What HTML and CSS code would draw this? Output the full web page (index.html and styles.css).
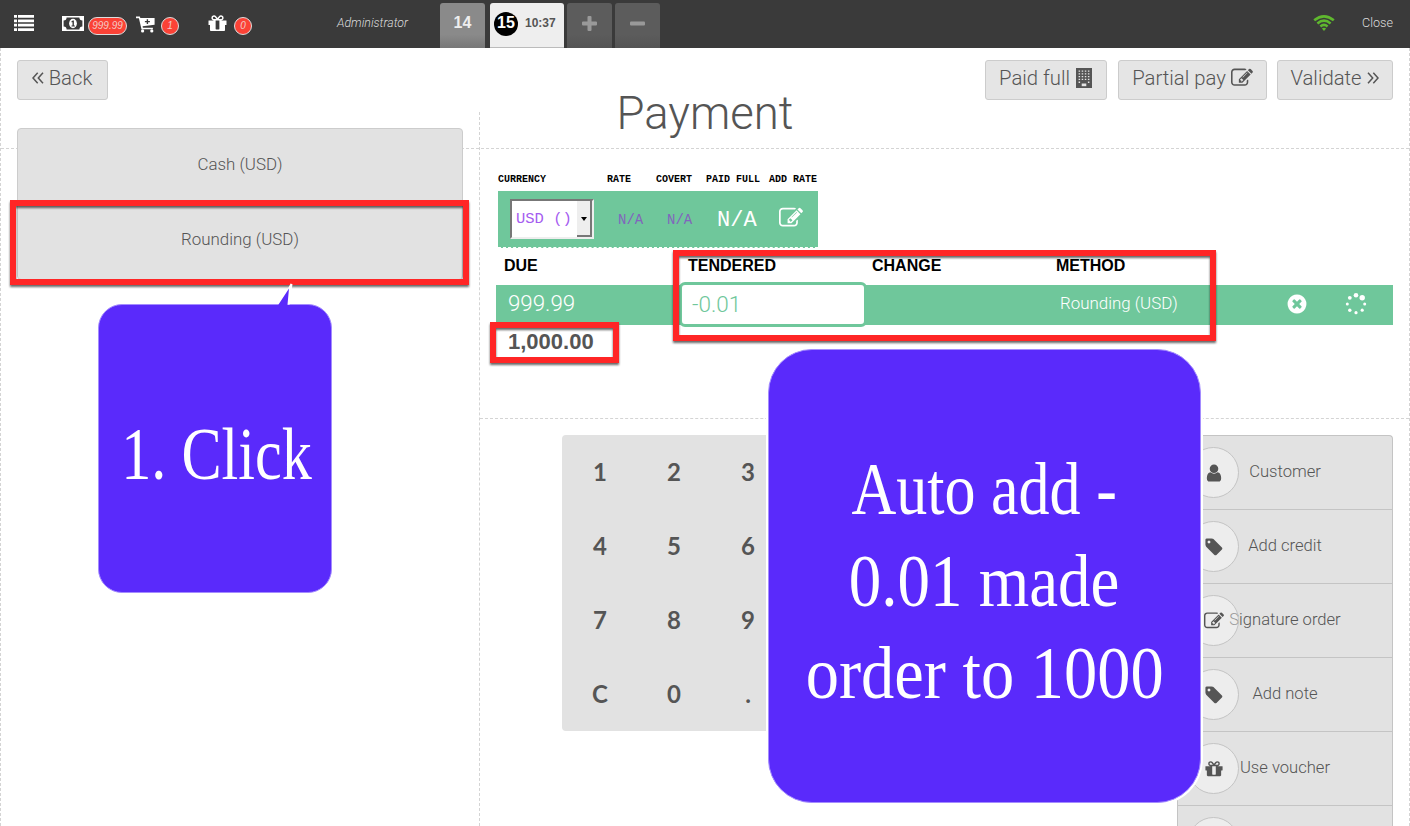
FILE: index.html
```html
<!DOCTYPE html>
<html lang="en">
<head>
<meta charset="utf-8">
<title>Payment</title>
<link rel="stylesheet" href="styles.css">
</head>
<body>
<svg class="defs" width="0" height="0">
  <symbol id="edit" viewBox="0 0 1792 1792"><path d="M888 1184l116-116-152-152-116 116v56h96v96h56zm440-720q-16-16-33 1l-350 350q-17 17-1 33t33-1l350-350q17-17 1-33zm80 594v190q0 119-84.5 203.5t-203.5 84.5h-832q-119 0-203.5-84.5t-84.5-203.5v-832q0-119 84.5-203.5t203.5-84.5h832q63 0 117 25 15 7 18 23 3 17-9 29l-49 49q-14 14-32 8-23-6-45-6h-832q-66 0-113 47t-47 113v832q0 66 47 113t113 47h832q66 0 113-47t47-113v-126q0-13 9-22l64-64q15-15 35-7t20 29zm-96-738l288 288-672 672h-288v-288zm444 132l-92 92-288-288 92-92q28-28 68-28t68 28l152 152q28 28 28 68t-28 68z"/></symbol>
  <symbol id="user" viewBox="0 0 1792 1792"><path d="M1536 1399q0 109-62.5 187t-150.5 78h-854q-88 0-150.5-78t-62.5-187q0-85 8.5-160.5t31.5-152 58.5-131 94-89 134.5-34.5q131 128 313 128t313-128q76 0 134.5 34.5t94 89 58.5 131 31.5 152 8.5 160.5zm-256-887q0 159-112.5 271.5t-271.5 112.5-271.5-112.5-112.5-271.5 112.5-271.5 271.5-112.5 271.5 112.5 112.5 271.5z"/></symbol>
  <symbol id="tag" viewBox="0 0 1792 1792"><path d="M576 448q0-53-37.5-90.5t-90.5-37.5-90.5 37.5-37.5 90.5 37.5 90.5 90.5 37.5 90.5-37.5 37.5-90.5zm1067 576q0 53-37 90l-491 492q-39 37-91 37-53 0-90-37l-715-716q-38-37-64.5-101t-26.5-117v-416q0-52 38-90t90-38h416q53 0 117 26.5t102 64.5l715 714q37 39 37 91z"/></symbol>
  <symbol id="gift" viewBox="0 0 1792 1792"><path d="M1056 1356v-716h-320v716q0 25 18 38.5t46 13.5h192q28 0 46-13.5t18-38.5zm-456-844h195l-126-161q-26-31-69-31-40 0-68 28t-28 68 28 68 68 28zm688-96q0-40-28-68t-68-28q-43 0-69 31l-125 161h194q40 0 68-28t28-68zm376 256v320q0 14-9 23t-23 9h-96v416q0 40-28 68t-68 28h-1088q-40 0-68-28t-28-68v-416h-96q-14 0-23-9t-9-23v-320q0-14 9-23t23-9h440q-93 0-158.5-65.5t-65.5-158.5 65.5-158.5 158.5-65.5q107 0 168 77l128 165 128-165q61-77 168-77 93 0 158.5 65.5t65.5 158.5-65.5 158.5-158.5 65.5h440q14 0 23 9t9 23z"/></symbol>
  <symbol id="remove" viewBox="0 0 1792 1792"><path d="M1277 1122q0-26-19-45l-181-181 181-181q19-19 19-45 0-27-19-46l-90-90q-19-19-46-19-26 0-45 19l-181 181-181-181q-19-19-45-19-27 0-46 19l-90 90q-19 19-19 46 0 26 19 45l181 181-181 181q-19 19-19 45 0 27 19 46l90 90q19 19 46 19 26 0 45-19l181-181 181 181q19 19 45 19 27 0 46-19l90-90q19-19 19-46zm387-226q0 209-103 385.5t-279.5 279.5-385.5 103-385.5-103-279.5-279.5-103-385.5 103-385.5 279.5-279.5 385.5-103 385.5 103 279.5 279.5 103 385.5z"/></symbol>
</svg>

<header class="topbar">
  <svg class="ico-list" width="20" height="16" viewBox="0 0 20 16"><path d="M0 0h3v2.8H0zM4 0h16v2.8H4zM0 4.4h3v2.8H0zM4 4.4h16v2.8H4zM0 8.8h3v2.8H0zM4 8.8h16v2.8H4zM0 13.2h3V16H0zM4 13.2h16V16H4z"/></svg>
  <svg class="ico-money" width="22" height="15" viewBox="0 0 22 15"><path fill-rule="evenodd" d="M0 0h22v15H0zM4.6 1.6A3 3 0 0 1 1.6 4.6v5.8a3 3 0 0 1 3 3h12.8a3 3 0 0 1 3-3V4.600a3 3 0 0 1-3-3z"/><ellipse cx="11" cy="7.500" rx="3.900" ry="4.700"/><path class="cut" d="M9.300 5.600l1.500-1.200h1.100v5h1v1.100H9.500V9.400h1V6l-.6.500z"/></svg>
  <span class="badge badge-total">999.99</span>
  <svg class="ico-cart" width="20" height="17" viewBox="0 0 20 17"><path fill-rule="evenodd" d="M0 .6h3.800l.6 1.500H18.600v6.700L6.600 10.300l.3 1.400h10v1.500H5.500L2.900 2.200H0zM10.700 3.200v1.700H8.900v1.300h1.800v1.700h1.400V6.200h1.800V4.900h-1.800V3.200z"/><circle cx="6.600" cy="14.900" r="1.600"/><circle cx="15.800" cy="14.900" r="1.600"/></svg>
  <span class="badge badge-cart">1</span>
  <svg class="ico-gift" width="21" height="21"><use href="#gift"/></svg>
  <span class="badge badge-gift">0</span>
  <span class="cashier">Administrator</span>
  <nav class="tabs">
    <span class="tab tab-old">14</span>
    <span class="tab tab-active"><b>15</b><em>10:37</em></span>
    <span class="tab tab-tool"><svg width="15" height="15" viewBox="0 0 15 15"><path d="M5.500 1q0-1 1-1h2q1 0 1 1v4.500H14q1 0 1 1v2q0 1-1 1H9.500V14q0 1-1 1h-2q-1 0-1-1V9.500H1q-1 0-1-1v-2q0-1 1-1h4.500z"/></svg></span>
    <span class="tab tab-tool"><svg width="15" height="15" viewBox="0 0 15 15"><rect y="5.500" width="15" height="4" rx="1"/></svg></span>
  </nav>
  <svg class="ico-wifi" width="22" height="16" viewBox="0 0 22 16"><path d="M1.200 5.300Q11-2.600 20.800 5.300M4.400 8.400Q11 3 17.600 8.400M7.400 11.400Q11 8.400 14.600 11.400"/><path class="dot" d="M8.900 13.500Q11 12.200 13.100 13.500L11 15.900z"/></svg>
  <span class="close">Close</span>
</header>

<main class="screen">
  <section class="heading">
    <div class="side"><button class="btn btn-back"><svg width="12" height="12" viewBox="0 0 12 12"><path d="M5.700.8L1 6l4.700 5.200M11 .8L6.300 6l4.700 5.200"/></svg><span>Back</span></button></div>
    <h1>Payment</h1>
    <div class="side side-right">
      <button class="btn btn-full"><span>Paid full</span><svg class="solid" width="16" height="20" viewBox="0 0 16 20"><path fill-rule="evenodd" d="M0 0h16v20H0zM2.600 2.400v1.300h1.500V2.400zm3.100 0v1.300h1.500V2.400zm3.100 0v1.300h1.500V2.400zm3.100 0v1.300h1.500V2.400zM2.600 5.200v1.300h1.500V5.200zm3.100 0v1.300h1.500V5.200zm3.100 0v1.300h1.500V5.200zm3.100 0v1.300h1.500V5.200zM2.600 8v1.300h1.500V8zm3.100 0v1.300h1.500V8zm3.100 0v1.300h1.500V8zm3.100 0v1.300h1.500V8zM2.600 10.800v1.300h1.500v-1.300zm3.100 0v1.300h1.500v-1.300zm3.100 0v1.300h1.500v-1.300zm3.100 0v1.300h1.500v-1.300zM2.600 13.600v1.300h1.500v-1.300zm9.300 0v1.300h1.500v-1.300z"/><path d="M5.700 15.500h4.600v2.700H5.700z" class="door"/></svg></button>
      <button class="btn btn-partial"><span>Partial pay</span><svg class="solid" width="22" height="22"><use href="#edit"/></svg></button>
      <button class="btn btn-validate"><span>Validate</span><svg width="12" height="12" viewBox="0 0 12 12"><path d="M1 .8L5.700 6 1 11.200M6.300.8L11 6l-4.700 5.200"/></svg></button>
    </div>
  </section>

  <div class="columns">
    <aside class="methods">
      <div class="method-list">
        <div class="method">Cash (USD)</div>
        <div class="method">Rounding (USD)</div>
      </div>
    </aside>

    <section class="work">
      <div class="lines">
        <div class="rates">
          <div class="rates-row rates-head"><span>CURRENCY</span><span>RATE</span><span>COVERT</span><span>PAID FULL</span><span>ADD RATE</span></div>
          <div class="rates-row rates-body">
            <span class="select"><span>USD ()</span><i></i></span>
            <span class="na">N/A</span><span class="na">N/A</span><span class="na na-big">N/A</span>
            <svg width="24" height="24"><use href="#edit"/></svg>
          </div>
        </div>
        <div class="due-row due-head"><span>DUE</span><span>TENDERED</span><span>CHANGE</span><span>METHOD</span></div>
        <div class="due-row due-line">
          <span class="amount">999.99</span>
          <span class="tendered">-0.01</span>
          <span></span>
          <span class="via">Rounding (USD)</span>
          <svg class="ico-remove" width="22" height="22"><use href="#remove"/></svg>
          <svg class="ico-spin" width="22" height="22" viewBox="-11 -11 22 22"><circle cy="-8.700" r="2.300"/><circle cx="6.200" cy="-6.200" r="2.700"/><circle cx="8.700" r="1.500"/><circle cx="6.200" cy="6.200" r="1.600"/><circle cy="8.700" r="1.600"/><circle cx="-6.200" cy="6.200" r="1.700"/><circle cx="-8.700" r="1.500"/><circle cx="-6.200" cy="-6.200" r="1.900"/></svg>
        </div>
        <div class="total">1,000.00</div>
      </div>

      <div class="entry">
        <div class="keypad">
          <span>1</span><span>2</span><span>3</span>
          <span>4</span><span>5</span><span>6</span>
          <span>7</span><span>8</span><span>9</span>
          <span>C</span><span>0</span><span>.</span>
        </div>
        <div class="actions">
          <div class="action"><span>Customer</span><i><svg width="20" height="20"><use href="#user"/></svg></i></div>
          <div class="action"><span>Add credit</span><i><svg width="20" height="20"><use href="#tag"/></svg></i></div>
          <div class="action"><span>Signature order</span><i><svg width="20" height="20"><use href="#edit"/></svg></i></div>
          <div class="action"><span>Add note</span><i><svg width="20" height="20"><use href="#tag"/></svg></i></div>
          <div class="action"><span>Use voucher</span><i><svg width="20" height="20"><use href="#gift"/></svg></i></div>
          <div class="action"><i></i></div>
        </div>
      </div>
    </section>
  </div>
</main>

<div class="mark mark-method"></div>
<div class="mark mark-line"></div>
<div class="mark mark-total"></div>

<div class="callout callout-click">
  <svg class="tail" width="18" height="24" viewBox="0 0 18 24"><path class="rim" d="M4.500 21.500L15.500 1 12.500 21.500"/><path d="M2.500 24V21.500L13 5.500 11.500 21.500V24z"/></svg>
  <p class="click">1. Click</p>
</div>
<div class="callout callout-auto">
  <p class="auto-1">Auto add -</p>
  <p class="auto-2">0.01 made</p>
  <p class="auto-3">order to 1000</p>
</div>
</body>
</html>
```
FILE: styles.css
```css
* { box-sizing: border-box; }
body {
  position: relative;
  width: 1410px;
  height: 826px;
  margin: 0;
  overflow: hidden;
  background: #fff;
  color: #555;
  font-family: Roboto, "Liberation Sans", sans-serif;
  font-weight: 300;
  white-space: nowrap;
}
svg { display: block; flex: none; }
.defs { position: absolute; }
i, em { font-style: normal; }

/* top bar */
.topbar {
  display: flex;
  height: 48px;
  background: #3a3a3a;
  color: #ddd;
  fill: #fff;
}
.ico-list { margin: 15px 0 0 14px; }
.ico-money { margin: 16px 0 0 28px; }
.cut { fill: #3a3a3a; }
.badge {
  height: 18px;
  margin-top: 17px;
  border: 1px solid #ddd;
  border-radius: 9px;
  background: #fb4236;
  color: #f3c9c5;
  font: italic 400 10px/15px "Liberation Sans", sans-serif;
  text-align: center;
}
.badge-total { width: 39px; margin-left: 4px; }
.ico-cart { margin: 16px 0 0 9px; }
.badge-cart { width: 18px; margin-left: 5px; }
.ico-gift { margin: 13px 0 0 28px; }
.badge-gift { width: 18px; margin-left: 6px; }
.cashier {
  width: 103px;
  margin-left: 85px;
  font-size: 12.300px;
  font-style: italic;
  line-height: 46px;
}
.tabs { display: flex; gap: 3px; padding-top: 3px; }
.tab {
  display: flex;
  justify-content: center;
  width: 45px;
  border-radius: 3px 3px 0 0;
  font-family: "Liberation Sans", sans-serif;
  font-weight: 700;
}
.tab-old {
  margin-right: 2px;
  background: linear-gradient(#8a8a8a 70%, #777);
  color: #eee;
  font-size: 16px;
  line-height: 39px;
}
.tab-active {
  justify-content: flex-start;
  width: 74px;
  padding: 9px 0 0 4px;
  border-bottom: 1px solid #bbb;
  background: #eee;
}
.tab-active b {
  width: 24px;
  height: 24px;
  border-radius: 50%;
  background: #000;
  color: #fff;
  font-size: 16px;
  line-height: 22px;
  text-align: center;
}
.tab-active em { margin-left: 7px; color: #555; font-size: 12px; line-height: 22px; }
.tab-tool { padding-top: 13px; background: linear-gradient(#5c5c5c 70%, #545454); fill: #999; }
.ico-wifi { margin: 15px 0 0 653px; fill: none; stroke: #5fb82e; stroke-width: 2.600; }
.ico-wifi .dot { fill: #5fb82e; stroke: none; }
.close { margin-left: 27px; font-size: 12.600px; line-height: 46px; }

/* screen frame */
.screen {
  height: 778px;
  border: dashed #d4d4d4;
  border-width: 0 1px;
}
.heading {
  display: grid;
  grid-template-columns: 1fr auto 1fr;
  height: 101px;
  padding: 12px 16px 0;
  border-bottom: 1px dashed #d4d4d4;
}
.side { display: flex; align-items: flex-start; }
.side-right { justify-content: flex-end; }
h1 {
  margin: 27px 0 0;
  color: #555;
  font-size: 45.500px;
  font-weight: 300;
  line-height: 54px;
}
.btn {
  display: flex;
  align-items: center;
  justify-content: center;
  height: 40px;
  padding: 0 1px 4px 0;
  border: 1px solid #ccc;
  border-radius: 3px;
  background: #e5e5e5;
  color: #555;
  font: 300 20.300px/24px Roboto, sans-serif;
  fill: none;
  stroke: #555;
  stroke-width: 1.500;
}
.btn .solid { fill: #555; stroke: none; }
.btn .door { fill: #e5e5e5; }
.btn-back { gap: 5px; width: 91px; }
.btn-full { gap: 6px; width: 122px; margin-right: 11px; }
.btn-partial { gap: 5px; width: 149px; margin-right: 10px; padding-right: 0; }
.btn-validate { gap: 5px; width: 116px; }

.columns { display: grid; grid-template-columns: 479px 1fr; height: 677px; }

/* payment methods */
.methods {
  height: 714px;
  margin-top: -37px;
  padding: 16px 16px 0 16px;
  border-right: 1px dashed #d4d4d4;
}
.method-list {
  border: 1px solid #ccc;
  border-radius: 4px;
  background: #e2e2e2;
}
.method {
  height: 75px;
  font-size: 16.900px;
  line-height: 71px;
  text-align: center;
}

/* payment lines */
.lines {
  height: 270px;
  padding: 24px 16px 0;
  border-bottom: 1px dashed #d4d4d4;
}
.rates {
  width: 320px;
  margin-left: 2px;
  font-family: "Liberation Mono", monospace;
}
.rates-row { display: grid; grid-template-columns: 109px 49px 50px 63px 49px; }
.rates-head {
  height: 18px;
  color: #000;
  font-size: 10px;
  font-weight: 700;
  line-height: 13px;
}
.rates-body {
  height: 57px;
  border-bottom: 1px dashed #fff;
  background: #6fc79b;
  fill: #fff;
}
.select {
  display: flex;
  width: 84px;
  height: 40px;
  margin: 8px 0 0 12px;
  border: 2px solid;
  border-color: #777 #eee #eee #777;
  background: #fff;
  color: #a55cf0;
  font-size: 15.500px;
  line-height: 37px;
}
.select span { width: 65px; padding-left: 4px; }
.select i {
  width: 15px;
  border: solid #777;
  border-width: 0 2px 2px 0;
  background: #eee;
}
.select i::before {
  display: block;
  width: 0;
  margin: 16px 0 0 4px;
  border: 3.500px solid transparent;
  border-top: 4px solid #000;
  content: "";
}
.na { padding-left: 11px; color: #8164bd; font-size: 14px; line-height: 59px; }
.na-big { color: #fff; font-size: 22px; line-height: 60px; }
.rates-body svg { margin: 15px 0 0 10px; }
.due-row { display: grid; grid-template-columns: 184px 184px 184px 228px 58px 1fr; }
.due-head {
  height: 37px;
  padding-left: 8px;
  color: #000;
  font: 700 16px/36px "Liberation Sans", sans-serif;
}
.due-line {
  height: 40px;
  background: #6fc79b;
  color: #fff;
  fill: #fff;
}
.amount { padding-left: 12px; font-size: 22.300px; line-height: 37px; }
.tendered {
  width: 188px;
  height: 45px;
  margin: -3px 0 0 -1px;
  padding-left: 10px;
  border: 3px solid #6fc79b;
  border-radius: 6px;
  background: #fff;
  color: #6fc79b;
  font-size: 22.500px;
  line-height: 38px;
}
.via { padding-left: 12px; font-size: 16.900px; line-height: 37px; }
.ico-remove { margin: 8px 0 0 10px; }
.ico-spin { margin: 8px 0 0 11px; }
.total {
  padding-left: 12px;
  color: #555;
  font: 700 22px/34px "Liberation Sans", sans-serif;
}

/* keypad and actions */
.entry {
  display: flex;
  align-items: flex-start;
  justify-content: space-between;
  padding: 16px 16px 0 82px;
}
.keypad {
  display: grid;
  grid-template-columns: repeat(3, 74px);
  grid-auto-rows: 74px;
  width: 296px;
  padding-left: 1px;
  border-radius: 4px;
  background: #e2e2e2;
  font: 700 24px/74px Lato, sans-serif;
  text-align: center;
}
.actions {
  width: 216px;
  height: 391px;
  overflow: hidden;
  border: 1px solid #c4c4c4;
  border-bottom: 0;
  border-radius: 4px 4px 0 0;
  background: #e2e2e2;
}
.action {
  position: relative;
  height: 74px;
  border-bottom: 1px solid #c4c4c4;
  font-size: 16.600px;
  line-height: 72px;
  text-align: center;
}
.action i {
  position: absolute;
  top: 11px;
  left: 10px;
  display: flex;
  align-items: center;
  justify-content: center;
  width: 51px;
  height: 51px;
  border: 1px solid #c4c4c4;
  border-radius: 50%;
  background: rgba(255, 255, 255, .4);
  fill: #555;
}

/* annotations laid over the screen */
.mark {
  position: absolute;
  border: 6px solid #ff2626;
  filter: drop-shadow(0 2.500px 1px rgba(0, 0, 0, .6));
}
.mark-method { top: 200px; left: 10px; width: 459px; height: 85px; }
.mark-line { top: 250px; left: 673px; width: 543px; height: 91px; }
.mark-total { top: 322px; left: 490px; width: 129px; height: 41px; }
.callout {
  position: absolute;
  display: flex;
  flex-direction: column;
  align-items: center;
  border: 1px solid #a48cff;
  background: #5a2afb;
  box-shadow: 0 0 0 2px #fff;
  color: #fff;
  font: 400 73px/92px "Liberation Serif", serif;
}
.callout p { margin: 0; }
.callout-click {
  top: 304px;
  left: 98px;
  width: 234px;
  height: 289px;
  padding-top: 104px;
  border-radius: 24px;
}
.callout-auto {
  top: 349px;
  left: 768px;
  width: 433px;
  height: 454px;
  padding-top: 94px;
  border-radius: 44px;
}
.tail { position: absolute; top: -22px; left: 177px; fill: #5a2afb; }
.tail .rim { fill: #fff; stroke: #fff; stroke-width: 2; }
.click { transform: translateX(2px) scaleX(.825); }
.auto-1 { transform: scaleX(.85); }
.auto-2 { transform: scaleX(.89); }
.auto-3 { transform: scaleX(.91); }
```
